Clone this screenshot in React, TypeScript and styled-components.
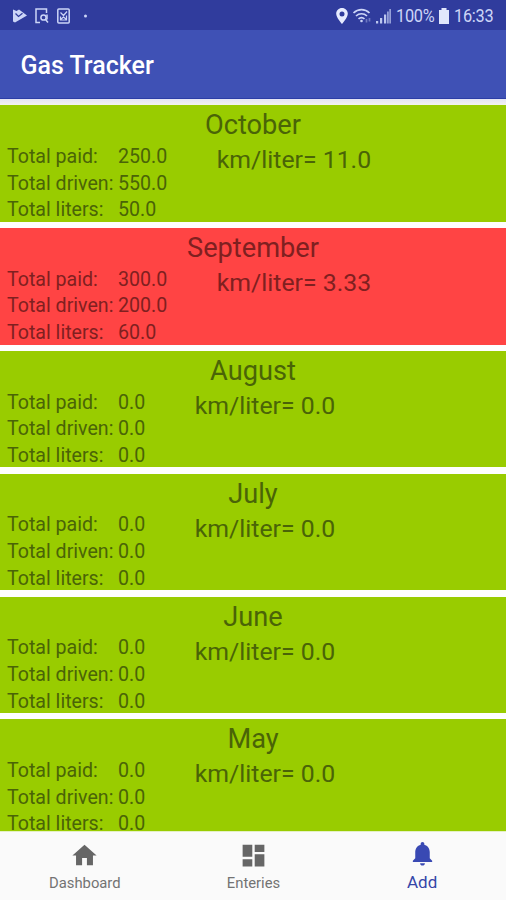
import React from "react";
import styled, { createGlobalStyle } from "styled-components";

const Global = createGlobalStyle`
  * { box-sizing: border-box; }
  body { margin: 0; background: #fff; font-family: Roboto, sans-serif; overflow: hidden; }
`;

const Screen = styled.div`
  width: 506px;
  height: 900px;
  display: flex;
  flex-direction: column;
  background: #fefefe;
  overflow: hidden;
`;

const StatusBar = styled.header`
  flex: none;
  height: 30px;
  padding: 0 12px 0 13px;
  display: flex;
  align-items: center;
  justify-content: space-between;
  background: #303c9d;
  color: #ccd5f7;
`;

const StatusGroup = styled.div<{ $gap: number }>`
  display: flex;
  align-items: center;
  gap: ${(p) => p.$gap}px;
  padding-top: 1px;
  svg { display: block; }
`;

const StatusText = styled.span<{ $width: number }>`
  width: ${(p) => p.$width}px;
  padding-top: 1px;
  font-size: 19px;
  line-height: 20px;
  letter-spacing: -0.3px;
  white-space: nowrap;
  transform: scaleX(0.86);
  transform-origin: left center;
`;

const AppBar = styled.div`
  flex: none;
  height: 69px;
  padding: 3px 20px 0 20.500px;
  display: flex;
  align-items: center;
  background: #3f51b5;
  border-bottom: 1px solid #2c3ea6;
`;

const Title = styled.h1`
  margin: 0;
  color: #fff;
  font-size: 25px;
  font-weight: 500;
  line-height: 30px;
`;

const List = styled.main`
  flex: 1;
  min-height: 0;
  padding-top: 6.4px;
  display: flex;
  flex-direction: column;
  gap: 6.3px;
  overflow: hidden;
  background: linear-gradient(#e4e4f4, #f3f3ee 6px, #fefefe 7px);
`;

const Card = styled.section<{ $low: boolean }>`
  flex: none;
  height: 116.5px;
  background: ${(p) => (p.$low ? "#ff4444" : "#99cc00")};
  color: ${(p) => (p.$low ? "#7f2020" : "#4a6407")};
`;

const Month = styled.h2`
  margin: 0;
  padding-top: 3px;
  text-align: center;
  font-size: 27.2px;
  font-weight: 400;
  line-height: 34px;
  height: 38px;
`;

const CardBody = styled.div`
  display: flex;
  padding-left: 7px;
`;

const Totals = styled.dl`
  margin: 0;
  padding-top: 0.6px;
  display: grid;
  grid-template-columns: 111px auto;
  grid-auto-rows: 26.7px;
  font-size: 19.6px;
  line-height: 26.7px;
  white-space: nowrap;
  dt, dd { margin: 0; }
`;

const Rate = styled.div`
  margin-left: 49.500px;
  font-size: 24.8px;
  line-height: 34px;
  white-space: nowrap;
`;

const BottomNav = styled.nav`
  flex: none;
  height: 69px;
  display: grid;
  grid-template-columns: repeat(3, 1fr);
  background: #fafafa;
  border-top: 1px solid #e4f1c4;
`;

const Tab = styled.a<{ $active?: boolean }>`
  display: flex;
  flex-direction: column;
  align-items: center;
  padding-left: 1px;
  padding-top: ${(p) => (p.$active ? 7 : 9)}px;
  color: ${(p) => (p.$active ? "#3545a8" : "#737373")};
  font-size: ${(p) => (p.$active ? 17 : 14.8)}px;
  line-height: 20px;
  svg { display: block; fill: ${(p) => (p.$active ? "#3949b3" : "#666")}; }
  span { margin-top: ${(p) => (p.$active ? 4 : 3)}px; }
`;

const Icon = ({ d, size = 29 }: { d: string; size?: number }) => (
  <svg width={size} height={size} viewBox="0 0 24 24"><path d={d} /></svg>
);

const months = [
  { name: "October", paid: "250.0", driven: "550.0", liters: "50.0", rate: "11.0" },
  { name: "September", paid: "300.0", driven: "200.0", liters: "60.0", rate: "3.33", low: true },
  ...["August", "July", "June", "May"].map((name) => ({
    name, paid: "0.0", driven: "0.0", liters: "0.0", rate: "0.0", low: false,
  })),
];

export default function App() {
  return (
    <Screen>
      <Global />
      <StatusBar>
        <StatusGroup $gap={8}>
          <svg width="14" height="14" viewBox="0 0 14 14">
            <path d="M0 .5L3.500 2 6 .5 14 6.500 2 13.500 0 12.500z" fill="currentColor" />
            <path d="M2.500 4.500l3 3 4-3.200" fill="none" stroke="#303c9d" strokeWidth="1.300" />
          </svg>
          <svg width="14" height="16" viewBox="0 0 14 16" fill="none" stroke="currentColor" strokeWidth="1.500">
            <path d="M5 14.500H1V1h10.500v4" />
            <circle cx="8.500" cy="9.500" r="2.600" />
            <path d="M10.500 11.500l2.500 3M12 6.500v5" />
          </svg>
          <svg width="13" height="16" viewBox="0 0 13 16" fill="none" stroke="currentColor" strokeWidth="1.500">
            <rect x=".8" y="1" width="11.400" height="14" rx="1" />
            <path d="M3.500 4.500l3 3 3.500-4M3.500 8.500V12h6V7.500M3.500 11.500l3-2.500 3 2.500" strokeWidth="1.200" />
          </svg>
          <svg width="14" height="16" viewBox="0 0 14 16"><circle cx="7.500" cy="8" r="1.500" fill="currentColor" /></svg>
        </StatusGroup>
        <StatusGroup $gap={4}>
          <svg width="12" height="16" viewBox="0 0 12 16" fill="#e6ebff">
            <path fillRule="evenodd" d="M6 0C2.700 0 .2 2.500.2 5.700.2 9.500 6 16 6 16s5.800-6.500 5.800-10.300C11.800 2.500 9.300 0 6 0zm0 3.400a2.500 2.500 0 110 5 2.500 2.500 0 010-5z" />
          </svg>
          <svg width="20" height="16" viewBox="0 0 20 16" fill="none" stroke="currentColor" strokeWidth="1.700">
            <path d="M1.500 5C6 .5 13 .5 17.500 5M4 8c3.200-3 7.800-3 11 0M6.500 10.800c2-1.700 4-1.700 6 0" />
            <circle cx="9.500" cy="13" r="1.300" fill="currentColor" stroke="none" />
            <path d="M14.500 11v3.500M17.500 10v3.500" opacity=".4" />
          </svg>
          <svg width="16" height="16" viewBox="0 0 16 16" fill="currentColor">
            <path d="M0 13h2.200v2.500H0zM4 10h2.200v5.500H4zM8 6.500h2.200v9H8z" opacity=".9" />
            <path d="M11 3.500h1.800v12H11zM13.300 1h1.700v14.500h-1.700z" opacity=".65" />
          </svg>
          <StatusText $width={38}>100%</StatusText>
          <svg width="12" height="16" viewBox="0 0 12 16"><path d="M3.500 0h5v2H11v14H1V2h2.500z" fill="#e0e6fc" /></svg>
          <StatusText $width={40}>16:33</StatusText>
        </StatusGroup>
      </StatusBar>
      <AppBar><Title>Gas Tracker</Title></AppBar>
      <List>
        {months.map((m) => (
          <Card key={m.name} $low={!!m.low}>
            <Month>{m.name}</Month>
            <CardBody>
              <Totals>
                <dt>Total paid:</dt><dd>{m.paid}</dd>
                <dt>Total driven:</dt><dd>{m.driven}</dd>
                <dt>Total liters:</dt><dd>{m.liters}</dd>
              </Totals>
              <Rate>km/liter= {m.rate}</Rate>
            </CardBody>
          </Card>
        ))}
      </List>
      <BottomNav>
        <Tab><Icon d="M10 20v-6h4v6h5v-8h3L12 3 2 12h3v8z" /><span>Dashboard</span></Tab>
        <Tab><Icon d="M3 13h8V3H3v10zm0 8h8v-6H3v6zm10 0h8V11h-8v10zm0-18v6h8V3h-8z" /><span>Enteries</span></Tab>
        <Tab $active><Icon d="M12 22c1.100 0 2-.9 2-2h-4c0 1.100.9 2 2 2zm6-6v-5c0-3.070-1.640-5.640-4.500-6.320V4c0-.83-.67-1.500-1.500-1.500s-1.500.67-1.500 1.500v.68C7.630 5.360 6 7.920 6 11v5l-2 2v1h16v-1l-2-2z" /><span>Add</span></Tab>
      </BottomNav>
    </Screen>
  );
}
